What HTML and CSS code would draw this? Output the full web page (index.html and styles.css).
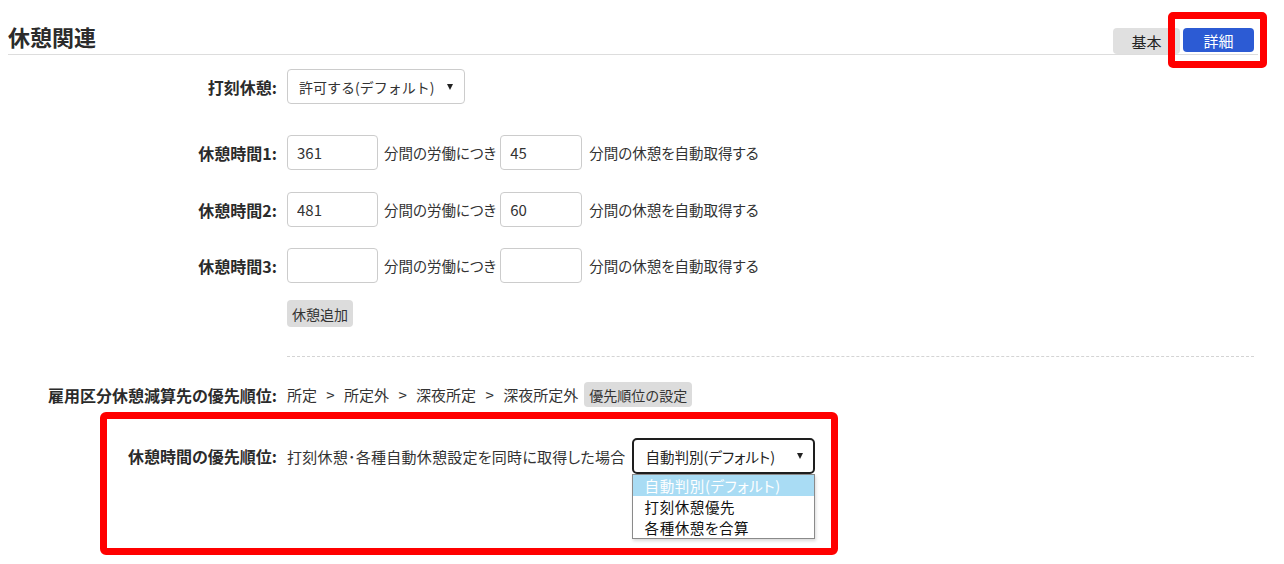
FILE: index.html
```html
<!DOCTYPE html>
<html lang="ja">
<head>
    <meta charset="UTF-8">
    <meta name="viewport" content="width=device-width, initial-scale=1.0">
    <title>休憩関連</title>
    <link rel="stylesheet" href="styles.css">
</head>
<body>
    <div class="container">
        <!-- Section header -->
        <div class="section-head">
            <h2 class="section-title">休憩関連</h2>
            <div class="view-switch">
                <button class="switch-btn">基本</button>
                <button class="switch-btn is-active">詳細<span class="mark"></span></button>
            </div>
        </div>

        <!-- Punch break -->
        <div class="form-row row-punch">
            <label class="row-label">打刻休憩:</label>
            <div class="select-wrap">
                <select class="select select-punch">
                    <option>許可する(デフォルト)</option>
                    <option>許可しない</option>
                </select>
            </div>
        </div>

        <!-- Auto breaks -->
        <div class="form-row row-break row-break-1">
            <label class="row-label">休憩時間1:</label>
            <input class="num-input" type="text" value="361">
            <span class="row-text">分間の労働につき</span>
            <input class="num-input num-short" type="text" value="45">
            <span class="row-text">分間の休憩を自動取得する</span>
        </div>
        <div class="form-row row-break row-break-2">
            <label class="row-label">休憩時間2:</label>
            <input class="num-input" type="text" value="481">
            <span class="row-text">分間の労働につき</span>
            <input class="num-input num-short" type="text" value="60">
            <span class="row-text">分間の休憩を自動取得する</span>
        </div>
        <div class="form-row row-break row-break-3">
            <label class="row-label">休憩時間3:</label>
            <input class="num-input" type="text" value="">
            <span class="row-text">分間の労働につき</span>
            <input class="num-input num-short" type="text" value="">
            <span class="row-text">分間の休憩を自動取得する</span>
        </div>

        <div class="add-row">
            <button class="small-btn">休憩追加</button>
        </div>

        <div class="divider"></div>

        <!-- Priority -->
        <div class="form-row row-priority">
            <label class="row-label">雇用区分休憩減算先の優先順位:</label>
            <span class="row-text">所定 &gt; 所定外 &gt; 深夜所定 &gt; 深夜所定外</span>
            <button class="small-btn">優先順位の設定</button>
        </div>

        <div class="highlight-box">
            <div class="form-row row-order">
                <label class="row-label">休憩時間の優先順位:</label>
                <span class="row-text">打刻休憩･各種自動休憩設定を同時に取得した場合</span>
                <div class="select-wrap dropdown">
                    <div class="select select-order">自動判別(デフォルト)</div>
                    <ul class="option-list">
                        <li class="is-selected">自動判別(デフォルト)</li>
                        <li>打刻休憩優先</li>
                        <li>各種休憩を合算</li>
                    </ul>
                </div>
            </div>
        </div>
    </div>
</body>
</html>
```

FILE: styles.css
```css
body {
    margin: 0;
    background: #fff;
    color: #333;
    font-family: "Noto Sans CJK JP", sans-serif;
    font-size: 14.5px;
    font-feature-settings: "palt";
}

.container {
    width: 1250px;
    margin-left: 8px;
}

/* header */
.section-head {
    display: flex;
    justify-content: space-between;
    height: 33px;
    margin-top: 22px;
    border-bottom: 1px solid #ddd;
    box-sizing: border-box;
}

.section-title {
    margin: 0;
    font-size: 22px;
    line-height: 28px;
    font-weight: bold;
    color: #2b2b2b;
}

.view-switch {
    display: flex;
    align-items: flex-end;
    gap: 3px;
    margin-right: 4px;
    margin-top: 4px;
}

.switch-btn {
    position: relative;
    height: 26px;
    width: 67px;
    border: none;
    border-radius: 4px;
    background: #e0e0e0;
    color: #222;
    font-family: inherit;
    font-size: 15px;
    padding: 0;
}

.switch-btn.is-active {
    width: 71px;
    height: 24px;
    margin-bottom: 2px;
    background: #2c5bd4;
    color: #fff;
}

.mark {
    position: absolute;
    left: -15px;
    right: -13px;
    top: -16px;
    bottom: -16px;
    border: 7px solid #f00;
    border-radius: 5px;
}

/* rows */
.form-row {
    display: flex;
    align-items: center;
}

.row-label {
    width: 279px;
    padding-right: 10px;
    box-sizing: border-box;
    text-align: right;
    font-weight: bold;
    font-size: 16px;
    color: #2b2b2b;
}

.row-text {
    margin: 0 4px 0 6px;
    white-space: nowrap;
}

.row-punch {
    margin-top: 14px;
}

.row-break-1 { margin-top: 31px; }
.row-break-2 { margin-top: 22px; }
.row-break-3 { margin-top: 21px; }

.num-input {
    width: 91px;
    height: 35px;
    box-sizing: border-box;
    border: 1px solid #ccc;
    border-radius: 4px;
    padding: 0 9px;
    font-family: inherit;
    font-size: 15px;
    color: #333;
}

.num-input.num-short {
    width: 82px;
}

.row-break .row-text:last-child {
    margin-left: 7px;
}

.select-wrap {
    position: relative;
}

.select-wrap::after {
    content: "";
    position: absolute;
    right: 12px;
    top: 15px;
    border-left: 3.5px solid transparent;
    border-right: 3.5px solid transparent;
    border-top: 6px solid #222;
}

.select {
    appearance: none;
    -webkit-appearance: none;
    height: 35px;
    box-sizing: border-box;
    border: 1px solid #ccc;
    border-radius: 4px;
    background: #fff;
    padding: 0 12px 0 11px;
    font-family: inherit;
    font-size: 14px;
    color: #333;
}

.select-punch {
    width: 178px;
}

.select-order {
    display: flex;
    align-items: center;
    width: 183px;
    height: 36px;
    border: 2px solid #1e1e1e;
    border-radius: 5px;
    padding-left: 12px;
    font-size: 14.5px;
    color: #222;
}

.add-row {
    margin-top: 17px;
    padding-left: 279px;
}

.small-btn {
    height: 27px;
    border: none;
    border-radius: 4px;
    background: #dcdcdc;
    color: #333;
    padding: 0 5px;
    font-family: inherit;
    font-size: 14px;
}

.divider {
    margin: 29px 4px 0 279px;
    border-top: 1px dashed #d4d4d4;
}

.row-priority {
    margin-top: 25px;
}

.row-priority .row-text {
    margin: 0 6px 0 0;
    word-spacing: 6px;
    font-size: 15px;
}

.row-priority .small-btn {
    height: 25px;
}

/* annotated block */
.highlight-box {
    margin-top: 5px;
    margin-left: 92px;
    width: 738px;
    height: 143px;
    box-sizing: border-box;
    border: 7px solid #f00;
    border-radius: 6px;
    padding-top: 19px;
}

.row-order .row-label {
    width: 180px;
}

.row-order .row-text {
    margin: 0 6px 0 0;
    font-size: 15px;
    letter-spacing: 0.25px;
}

.option-list {
    position: absolute;
    top: 100%;
    left: 0;
    width: 183px;
    box-sizing: border-box;
    margin: 0;
    padding: 0;
    list-style: none;
    background: #fff;
    border: 1px solid #8a8a8a;
    box-shadow: 1px 2px 3px rgba(0,0,0,0.15);
    font-size: 14.5px;
    letter-spacing: 0.6px;
    color: #111;
}

.option-list li {
    height: 21px;
    line-height: 21px;
    padding-left: 12px;
}

.option-list li.is-selected {
    background: #a9dcf4;
    color: #fff;
}
```
